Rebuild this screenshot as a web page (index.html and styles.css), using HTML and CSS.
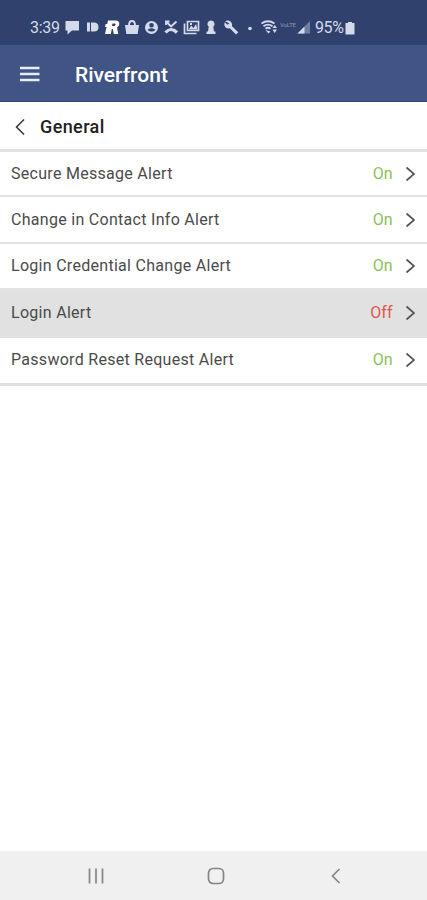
FILE: index.html
```html
<!DOCTYPE html>
<html lang="en">
<head>
<meta charset="utf-8">
<meta name="viewport" content="width=device-width, initial-scale=1">
<title>Riverfront</title>
<link rel="stylesheet" href="styles.css">
</head>
<body>
<div class="screen">
  <div class="status">
    <span class="time">3:39</span>
    <svg class="notices" width="190" height="20" viewBox="0 0 190 20" fill="currentColor">
      <path d="M1.500 4h13.500v9.500H8l-4.500 4v-4h-2z"/>
      <path d="M23 5.500h3v9h-3zM27 5.500h3q4.500 0 4.500 4.500t-4.500 4.500h-3z"/>
      <path class="bright" fill-rule="evenodd" d="M44 3.500h7.500q4 0 3.800 3.500-.3 2.700-2.300 3.500l1.300 6.500h-4.500l-1-5h-1l-1 5H41l1.600-7H41l.7-3h1.500zM48.500 6.500l-.5 2.500h2q1.300 0 1.500-1.300t-1-1.200z"/>
      <path d="M61 8h14l-1.300 9H62.300z"/>
      <path class="outline" d="M65 8.500q0-4.500 3-4.500t3 4.500"/>
      <path fill-rule="evenodd" d="M87.500 4a6.500 6.500 0 1 1 0 13 6.500 6.500 0 0 1 0-13zM87.500 6a2.300 2.300 0 1 0 0 4.600 2.300 2.300 0 0 0 0-4.600zM83.500 13q4 3 8 0-1-1.800-4-1.800t-4 1.800z"/>
      <path class="outline" d="M102 4.500l5 5 5.500-5M102 8V4.500h3.500"/>
      <path class="call" d="M101.500 15.500q5.500-6 11.500 0"/>
      <path class="frame" d="M120.500 6.500v10h12M123.500 4.500h11v9h-11z"/>
      <path d="M125 12.500l2-4 2.500 2.500L132 7l1.500 5.500zM126 6h2v2h-2z"/>
      <path d="M147 3.500a3.500 3.500 0 0 1 2.300 6.200l.7 4.800h1.500V17h-9v-2.500h1.500l.7-4.800A3.500 3.500 0 0 1 147 3.500z"/>
      <path d="M162.500 4.200q3.500-1.500 6 .8 1.700 1.800 1 4.200l6.300 6-2.300 2.300-6.200-6.200q-2.300.8-4.200-.9-2-2-.8-5.200l2.700 2.600 1.700-1.600z" transform="translate(-1.500 0)"/>
      <circle cx="186" cy="11.500" r="1.800"/>
    </svg>
    <svg class="network" width="54" height="20" viewBox="0 0 54 20" fill="currentColor">
      <path class="outline" d="M2.500 6.500q6.500-4.500 13 0M4.500 9.200q4.500-3.200 9 0M6.500 11.800q2.500-2 5 0"/>
      <path d="M6.500 13L9.500 16.500l2-2zM13.500 11l2.200-3 2.300 3zM13.500 12.500H18l-2.300 3.500z"/>
      <text class="volte" x="21" y="10" textLength="16">VoLTE</text>
      <path class="faint" d="M38.500 16.500L51 4v12.500z"/>
      <path d="M38.500 16.500l7-7v7z"/>
    </svg>
    <span class="percent">95%</span>
    <svg class="battery" width="10" height="14" viewBox="0 0 10 14" fill="currentColor"><path d="M3 1h4v1h2.500v11.500h-9V2H3z"/></svg>
  </div>
  <header class="appbar">
    <svg class="menu" width="20" height="16" viewBox="0 0 20 16"><path d="M0 2h19.500M0 8h19.500M0 14h19.500"/></svg>
    <h1>Riverfront</h1>
  </header>
  <div class="section">
    <svg class="back" width="10" height="18" viewBox="0 0 10 18"><path d="M9 1.500L1.500 9 9 16.500"/></svg>
    <h2>General</h2>
  </div>
  <ul class="alerts">
    <li><span class="name">Secure Message Alert</span><span class="on">On</span><svg class="next" width="10" height="16" viewBox="0 0 10 16"><path d="M1.500 1.500L9 8l-7.500 6.500"/></svg></li>
    <li><span class="name">Change in Contact Info Alert</span><span class="on">On</span><svg class="next" width="10" height="16" viewBox="0 0 10 16"><path d="M1.500 1.500L9 8l-7.500 6.500"/></svg></li>
    <li><span class="name">Login Credential Change Alert</span><span class="on">On</span><svg class="next" width="10" height="16" viewBox="0 0 10 16"><path d="M1.500 1.500L9 8l-7.500 6.500"/></svg></li>
    <li class="pressed"><span class="name">Login Alert</span><span class="off">Off</span><svg class="next" width="10" height="16" viewBox="0 0 10 16"><path d="M1.500 1.500L9 8l-7.500 6.500"/></svg></li>
    <li><span class="name">Password Reset Request Alert</span><span class="on">On</span><svg class="next" width="10" height="16" viewBox="0 0 10 16"><path d="M1.500 1.500L9 8l-7.500 6.500"/></svg></li>
  </ul>
  <nav class="navbar">
    <svg width="20" height="20" viewBox="0 0 20 20"><path d="M3.500 2.500v15M10 2.500v15M16.500 2.500v15"/></svg>
    <svg width="20" height="20" viewBox="0 0 20 20"><rect x="2.500" y="2.500" width="15" height="15" rx="4.500"/></svg>
    <svg width="20" height="20" viewBox="0 0 20 20"><path d="M13.500 3L6.500 10l7 7"/></svg>
  </nav>
</div>
</body>
</html>
```
FILE: styles.css
```css
* { box-sizing: border-box; }
body { margin: 0; font-family: Roboto, sans-serif; background: #fff; }
svg { display: block; flex: none; }
h1, h2, ul { margin: 0; padding: 0; }
.screen { height: 900px; display: flex; flex-direction: column; overflow: hidden; }

.status {
  height: 45px;
  flex: none;
  display: flex;
  align-items: center;
  padding: 10px 0 0 30px;
  background: #30416d;
  color: #d3daeb;
  font-size: 16px;
  line-height: 20px;
  white-space: nowrap;
}
.time { width: 34px; letter-spacing: -.3px; }
.notices { margin-top: -1px; }
.network { margin-left: 5px; margin-top: -1px; }
.percent { width: 31px; margin-left: 2px; letter-spacing: -.4px; }
.battery { margin-left: -1px; }
.bright { fill: #fff; }
.outline { fill: none; stroke: currentColor; stroke-width: 1.900; }
.call { fill: none; stroke: currentColor; stroke-width: 3.200; }
.frame { fill: none; stroke: currentColor; stroke-width: 1.700; }
.faint { opacity: .4; }
.volte { font-size: 6px; opacity: .55; }

.appbar {
  height: 57px;
  flex: none;
  display: flex;
  align-items: center;
  padding: 3px 20px 0;
  background: #405486;
  border-bottom: 1px solid #304779;
  color: #fff;
}
.menu { fill: none; stroke: #e6edf6; stroke-width: 2.400; margin-top: -2px; }
.appbar h1 { margin-left: 35px; font-size: 21px; line-height: 28px; font-weight: 500; }

.section {
  height: 50px;
  flex: none;
  display: flex;
  align-items: center;
  padding: 0 15px;
  border-bottom: 3px solid #e3e3e3;
}
.back { fill: none; stroke: #333; stroke-width: 1.500; margin-top: 2px; }
.section h2 { margin-left: 15px; font-size: 18px; line-height: 24px; font-weight: 500; color: #222; letter-spacing: .4px; margin-top: 2px; }

.alerts { list-style: none; border-bottom: 3px solid #dedfdf; }
.alerts li {
  height: 46.600px;
  display: flex;
  align-items: center;
  padding: 1px 12px 0 11px;
  border-bottom: 2px solid #e2e2e2;
  color: #4b4b4b;
  font-size: 16px;
  line-height: 22px;
}
.alerts li:first-child { height: 45px; padding-top: 0; }
.alerts li:last-child { height: 45px; border-bottom: 0; padding-top: 0; }
.alerts .pressed { height: 47.500px; background: #e1e1e1; }
.name { flex: 1; letter-spacing: .29px; }
.on { color: #8bc057; margin-right: .5px; }
.off { color: #df5650; margin-right: .5px; }
.next { margin-left: 12px; fill: none; stroke: #555; stroke-width: 1.700; }

.navbar {
  height: 49px;
  flex: none;
  margin-top: auto;
  padding: 1px 81px 0 86px;
  display: flex;
  align-items: center;
  justify-content: space-between;
  background: #f0f0f0;
}
.navbar svg { fill: none; stroke: #858585; stroke-width: 1.700; }
```
